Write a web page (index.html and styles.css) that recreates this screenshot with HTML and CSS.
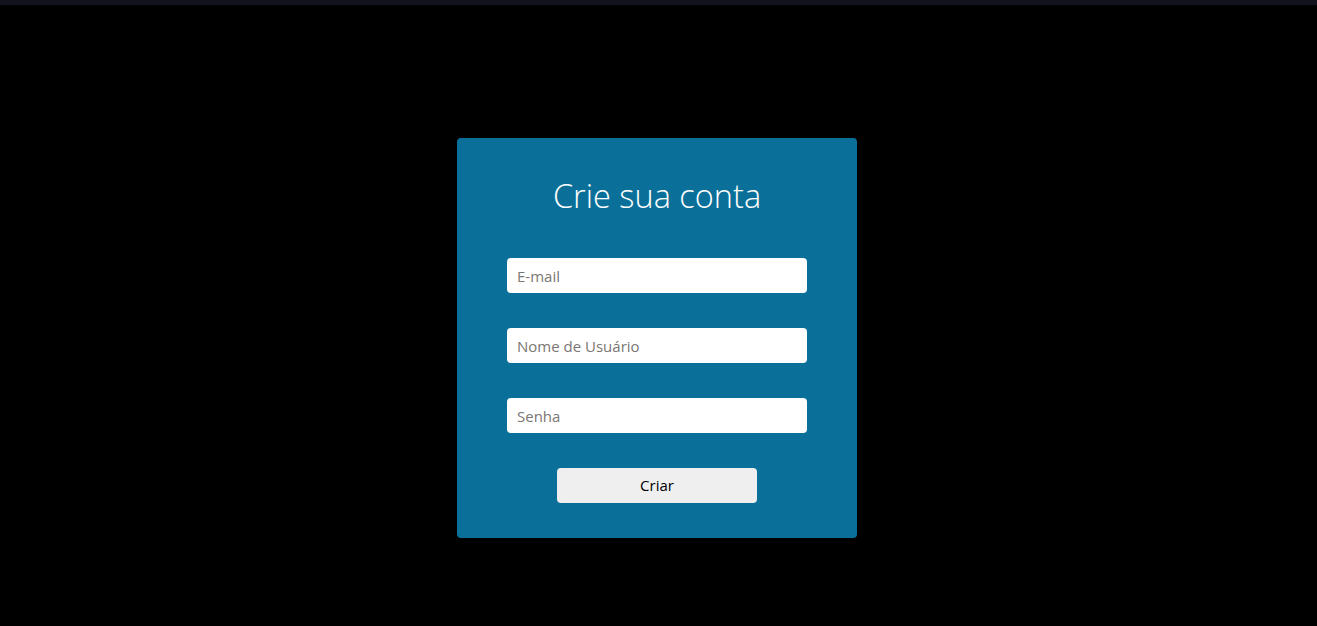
FILE: index.html
```html
<!DOCTYPE html>
<html lang="pt-BR">
<head>
<meta charset="utf-8">
<title>Crie sua conta</title>
<link rel="stylesheet" href="styles.css">
</head>
<body>
<div class="topbar"></div>
<main class="page">
  <form class="card">
    <h1 class="title">Crie sua conta</h1>
    <input class="field" type="email" placeholder="E-mail">
    <input class="field" type="text" placeholder="Nome de Usuário">
    <input class="field" type="password" placeholder="Senha">
    <button class="btn" type="button">Criar</button>
  </form>
</main>
</body>
</html>
```

FILE: styles.css
```css
* { box-sizing: border-box; }
html, body { margin: 0; padding: 0; background: #000; height: 100%; }
body { font-family: "Open Sans", "Noto Sans", sans-serif; overflow: hidden; }
.topbar { height: 5px; background: #12121c; }
.page {
  display: flex;
  justify-content: center;
  padding-top: 133px;
  padding-right: 3px;
}
.card {
  width: 400px;
  height: 400px;
  background: #0a7099;
  border-radius: 4px;
  padding: 35px 50px;
  display: flex;
  flex-direction: column;
  align-items: center;
  gap: 35px;
}
.title {
  margin: 0;
  height: 50px;
  line-height: 46px;
  font-size: 32.5px;
  font-weight: 300;
  color: #fff;
  text-align: center;
}
.field {
  width: 300px;
  height: 35px;
  border: none;
  border-radius: 4px;
  background: #fff;
  padding: 0 10px;
  font-family: "Open Sans", "Noto Sans", sans-serif;
  font-size: 15px;
  color: #333;
  outline: none;
}
.field::placeholder { color: #7a7672; }
.btn {
  width: 200px;
  height: 35px;
  border: none;
  border-radius: 4px;
  background: #efefef;
  color: #000;
  font-family: "Open Sans", "Noto Sans", sans-serif;
  font-size: 15px;
  padding: 0 0 2px;
  cursor: pointer;
}
```
